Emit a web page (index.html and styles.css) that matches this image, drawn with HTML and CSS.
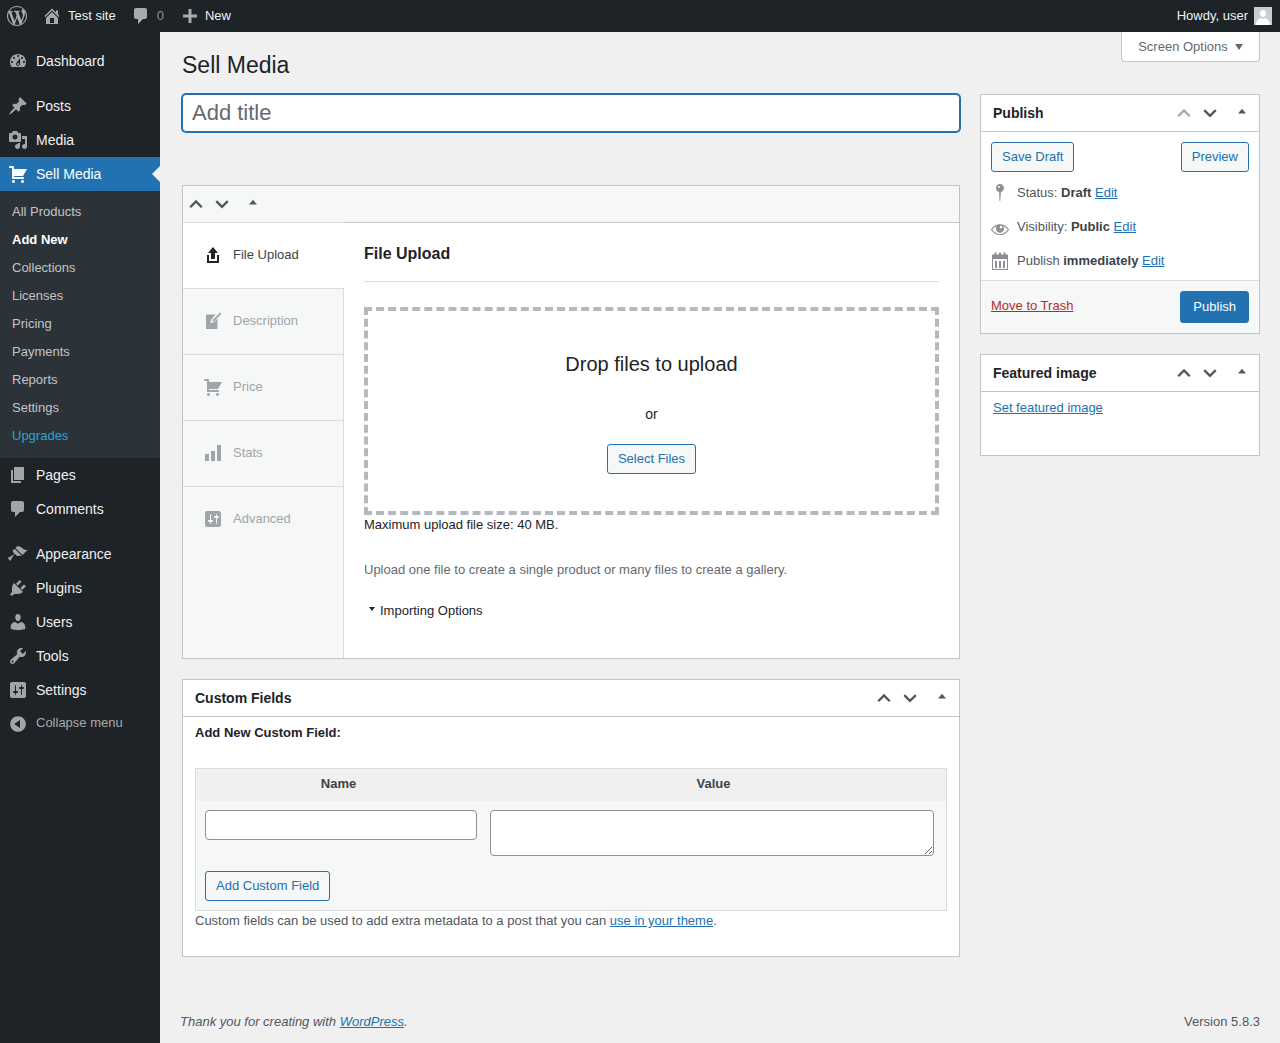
FILE: index.html
```html
<!DOCTYPE html>
<html lang="en">
<head>
<meta charset="utf-8">
<title>Sell Media</title>
<link rel="stylesheet" href="styles.css">
</head>
<body>
<svg class="sprite" aria-hidden="true">
<symbol id="i-wp" viewBox="0 0 20 20"><path d="M20 10c0-5.51-4.49-10-10-10C4.48 0 0 4.49 0 10c0 5.52 4.48 10 10 10 5.51 0 10-4.48 10-10zM7.78 15.37L4.37 6.22c.55-.02 1.17-.08 1.17-.08.5-.06.44-1.13-.06-1.11 0 0-1.45.11-2.37.11-.18 0-.37 0-.58-.01C4.12 2.69 6.87 1.11 10 1.11c2.33 0 4.45.87 6.05 2.34-.68-.11-1.65.39-1.65 1.58 0 .74.45 1.36.9 2.1.35.61.55 1.36.55 2.46 0 1.49-1.4 5-1.4 5l-3.03-8.37c.54-.02.82-.17.82-.17.5-.05.44-1.25-.06-1.22 0 0-1.44.12-2.38.12-.87 0-2.33-.12-2.33-.12-.5-.03-.56 1.2-.06 1.22l.92.08 1.26 3.41zM17.41 10c.24-.64.74-1.87.43-4.25.7 1.29 1.05 2.71 1.05 4.25 0 3.29-1.73 6.24-4.4 7.78.97-2.59 1.94-5.2 2.92-7.78zM6.1 18.09C3.12 16.65 1.11 13.53 1.11 10c0-1.3.23-2.48.72-3.59C3.25 10.3 4.67 14.2 6.1 18.09zm4.03-6.63l2.58 6.98c-.86.29-1.76.45-2.71.45-.79 0-1.57-.11-2.29-.33.81-2.38 1.62-4.74 2.42-7.1z"/></symbol>
<symbol id="i-home" viewBox="0 0 20 20"><path d="M16 8.5l1.53 1.53-1.06 1.06L10 4.62l-6.47 6.47-1.06-1.06L10 2.5l4 4v-2h2v4zm-6-2.46l6 5.99V18H4v-5.97zM12 17v-5H8v5h4z"/></symbol>
<symbol id="i-comment" viewBox="0 0 20 20"><path d="M5 2h9c1.1 0 2 .9 2 2v7c0 1.1-.9 2-2 2h-2l-5 5v-5H5c-1.1 0-2-.9-2-2V4c0-1.1.9-2 2-2z"/></symbol>
<symbol id="i-plus" viewBox="0 0 20 20"><path d="M17 8.5v3h-5.5V17h-3v-5.5H3v-3h5.5V3h3v5.500z"/></symbol>
<symbol id="i-dash" viewBox="0 0 20 20"><path d="M3.76 16h12.48c1.1-1.37 1.76-3.11 1.76-5 0-4.42-3.58-8-8-8s-8 3.58-8 8c0 1.89.66 3.63 1.76 5zM10 4c.55 0 1 .45 1 1s-.45 1-1 1-1-.45-1-1 .45-1 1-1zM6 6c.55 0 1 .45 1 1s-.45 1-1 1-1-.45-1-1 .45-1 1-1zm8 0c.55 0 1 .45 1 1s-.45 1-1 1-1-.45-1-1 .45-1 1-1zm-5.37 5.55L12 7v6c0 1.1-.9 2-2 2s-2-.9-2-2c0-.57.24-1.08.63-1.45zM4 10c.55 0 1 .45 1 1s-.45 1-1 1-1-.45-1-1 .45-1 1-1zm12 0c.55 0 1 .45 1 1s-.45 1-1 1-1-.45-1-1 .45-1 1-1zm-5 3c0-.55-.45-1-1-1s-1 .45-1 1 .45 1 1 1 1-.45 1-1z"/></symbol>
<symbol id="i-post" viewBox="0 0 20 20"><path d="M10.44 3.02l1.82-1.82 6.36 6.35-1.83 1.82c-1.05-.68-2.48-.57-3.41.36l-.75.75c-.92.93-1.04 2.35-.35 3.41l-1.83 1.82-2.41-2.41-2.8 2.79c-.42.42-3.38 2.71-3.8 2.29s1.86-3.39 2.28-3.81l2.79-2.79L4.1 9.36l1.83-1.82c1.05.69 2.48.57 3.4-.36l.75-.75c.93-.92 1.05-2.35.36-3.41z"/></symbol>
<symbol id="i-media" viewBox="0 0 20 20"><path d="M13 11V4c0-.55-.45-1-1-1h-1.67L9 1H5L3.67 3H2c-.55 0-1 .45-1 1v7c0 .55.45 1 1 1h10c.55 0 1-.45 1-1zM7 4.5c1.38 0 2.5 1.12 2.5 2.5S8.38 9.5 7 9.5 4.5 8.38 4.5 7 5.62 4.5 7 4.5zM14 6h5v10.5c0 1.38-1.12 2.5-2.5 2.5S14 17.88 14 16.5s1.12-2.5 2.5-2.5c.17 0 .34.02.5.05V9h-3V6zm-4 8.05V13h2v3.5c0 1.38-1.12 2.5-2.5 2.5S7 17.88 7 16.5 8.12 14 9.5 14c.17 0 .34.02.5.05z"/></symbol>
<symbol id="i-cart" viewBox="0 0 20 20"><path d="M6 13h9c.55 0 1 .45 1 1s-.45 1-1 1H5c-.55 0-1-.45-1-1V4H2c-.55 0-1-.45-1-1s.45-1 1-1h3c.55 0 1 .45 1 1v2h13l-4 7H6v1zm-.5 3c.83 0 1.5.67 1.5 1.5S6.33 19 5.5 19 4 18.33 4 17.5 4.67 16 5.5 16zm9 0c.83 0 1.5.67 1.5 1.5s-.67 1.5-1.5 1.5-1.5-.67-1.5-1.5.67-1.5 1.5-1.5z"/></symbol>
<symbol id="i-page" viewBox="0 0 20 20"><path d="M6 15V2h10v13H6zm-1 1h8v2H3V5h2v11z"/></symbol>
<symbol id="i-brush" viewBox="0 0 20 20"><path d="M14.48 11.06L7.41 3.99l1.5-1.5c.5-.56 2.3-.47 3.51.32 1.21.8 1.43 1.28 2.91 2.1 1.18.64 2.45 1.26 4.45.85zm-.71.71L6.7 4.7 4.93 6.47c-.39.39-.39 1.02 0 1.41l1.06 1.06c.39.39.39 1.03 0 1.42-.6.6-6.4 3.82-6.4 3.82l2.8 2.8s3.22-5.8 3.82-6.4c.39-.39 1.03-.39 1.42 0l1.06 1.06c.39.39 1.02.39 1.41 0z"/></symbol>
<symbol id="i-plugin" viewBox="0 0 20 20"><path d="M13.11 4.36L9.87 7.6 8 5.73l3.24-3.24c.35-.34 1.05-.2 1.56.32.52.51.66 1.21.31 1.55zm-8 1.77l.91-1.12 9.01 9.01-1.19.84c-.71.71-2.63 1.16-3.82 1.16H6.14L4.9 17.26c-.59.59-1.54.59-2.12 0-.59-.58-.59-1.53 0-2.12l1.24-1.24v-3.88c0-1.13.4-3.19 1.09-3.89zm7.26 3.97l3.24-3.24c.34-.35 1.04-.21 1.55.31.52.51.66 1.21.31 1.55l-3.24 3.25z"/></symbol>
<symbol id="i-user" viewBox="0 0 20 20"><path d="M10 9.25c-2.27 0-2.73-3.44-2.73-3.44C7 4.02 7.82 2 9.97 2c2.16 0 2.98 2.02 2.71 3.81 0 0-.41 3.44-2.68 3.44zm0 2.57L12.72 10c2.39 0 4.52 2.33 4.52 4.53v2.49s-3.65 1.13-7.24 1.13c-3.65 0-7.24-1.13-7.24-1.13v-2.49c0-2.25 1.94-4.48 4.47-4.48z"/></symbol>
<symbol id="i-tools" viewBox="0 0 20 20"><path d="M16.68 9.77c-1.34 1.34-3.3 1.67-4.95.99l-5.41 6.52c-.99.99-2.59.99-3.58 0s-.99-2.59 0-3.57l6.52-5.42c-.68-1.65-.35-3.61.99-4.95 1.28-1.28 3.12-1.62 4.72-1.06l-2.89 2.89 2.82 2.82 2.86-2.87c.53 1.58.18 3.39-1.08 4.65zM3.81 16.21c.4.39 1.04.39 1.43 0 .4-.4.4-1.04 0-1.43-.39-.4-1.03-.4-1.43 0-.39.39-.39 1.03 0 1.43z"/></symbol>
<symbol id="i-settings" viewBox="0 0 20 20"><path d="M18 16V4c0-1.1-.9-2-2-2H4c-1.1 0-2 .9-2 2v12c0 1.1.9 2 2 2h12c1.1 0 2-.9 2-2zM8 11h1c.55 0 1 .45 1 1s-.45 1-1 1H8v1.5c0 .28-.22.5-.5.5s-.5-.22-.5-.5V13H6c-.55 0-1-.45-1-1s.45-1 1-1h1V5.5c0-.28.22-.5.5-.5s.5.22.5.5V11zm5-2h-1c-.55 0-1-.45-1-1s.45-1 1-1h1V5.5c0-.28.22-.5.5-.5s.5.22.5.5V7h1c.55 0 1 .45 1 1s-.45 1-1 1h-1v5.5c0 .28-.22.5-.5.5s-.5-.22-.5-.5V9z"/></symbol>
<symbol id="i-collapse" viewBox="0 0 20 20"><path d="M10 2.16c4.33 0 7.84 3.51 7.84 7.84s-3.51 7.84-7.84 7.84S2.16 14.33 2.16 10 5.71 2.16 10 2.16zm2 11.72V6.12L6.18 9.97z"/></symbol>
<symbol id="i-up" viewBox="0 0 20 20"><path d="M3.600 13.600L10 7.200l6.400 6.400" fill="none" stroke="currentColor" stroke-width="2.600"/></symbol>
<symbol id="i-down" viewBox="0 0 20 20"><path d="M3.600 6.800l6.400 6.400 6.400-6.400" fill="none" stroke="currentColor" stroke-width="2.600"/></symbol>
<symbol id="i-tri" viewBox="0 0 20 20"><path d="M10 6l5 6H5z"/></symbol>
<symbol id="i-upload" viewBox="0 0 20 20"><path d="M8 14V8H5l5-6 5 6h-3v6H8zm-2 2v-6H4v8h12.01v-8H14v6H6z"/></symbol>
<symbol id="i-note" viewBox="0 0 20 20"><path d="M3 3.500h9.500L8 9l-.5 3 3-.5 4-4V18H3zM17.200 1.500l1.300 1.300-7.500 7.500-1.700.4.400-1.700z"/></symbol>
<symbol id="i-stats" viewBox="0 0 20 20"><path d="M2 11h4v7H2zM8 8h4v10H8zM14 2h4v16h-4z"/></symbol>
<symbol id="i-pin" viewBox="0 0 20 20"><path d="M10 1c2.200 0 4 1.800 4 4 0 1.900-1.300 3.500-3.100 3.900L10.300 18h-.8l-.4-9.100C7.300 8.500 6 6.900 6 5c0-2.200 1.800-4 4-4zM9 3a1 1 0 1 0 0 2 1 1 0 0 0 0-2z"/></symbol>
<symbol id="i-eye" viewBox="0 0 20 20"><path d="M18.300 9.500C15 4.900 8.500 3.800 3.900 7.200c-1.200.9-2.200 2.100-3 3.400.2.400.5.8.8 1.200 3.300 4.600 9.600 5.600 14.200 2.400.9-.7 1.700-1.400 2.400-2.400.3-.4.5-.8.8-1.200-.3-.4-.5-.8-.8-1.100zm-8.200-2.300c.5-.5 1.300-.5 1.800 0s.5 1.300 0 1.800-1.300.5-1.800 0c-.5-.5-.5-1.300 0-1.800zm-.1 7.700c-3.100 0-6-1.600-7.700-4.200C3.500 9 5.100 7.800 7 7c-.7.8-1 1.700-1 2.700 0 2.200 1.700 4.100 4 4.100 2.200 0 4.100-1.700 4.100-4 0-1-.4-2-1.100-2.800 1.900.8 3.500 2 4.700 3.700-1.700 2.600-4.600 4.200-7.700 4.200z"/></symbol>
<symbol id="i-cal" viewBox="0 0 20 20"><path d="M2 3.500h2.500V1.500h2v2h2.500V1.500h2v2h2.500V1.500h2v2H18V19H2zM3 8v10h14V8zM5 10h2v7H5zM9 10h2v7H9zM13 10h2v7h-2z"/></symbol>
</svg>

<header class="adminbar">
  <a class="ab-item ab-logo"><svg class="ab-wp"><use href="#i-wp"/></svg></a>
  <a class="ab-item ab-site"><svg class="ab-icon"><use href="#i-home"/></svg>Test site</a>
  <a class="ab-item ab-comments"><svg class="ab-icon"><use href="#i-comment"/></svg><span class="ab-count">0</span></a>
  <a class="ab-item ab-new"><svg class="ab-icon"><use href="#i-plus"/></svg>New</a>
  <a class="ab-item ab-user">Howdy, user<span class="avatar"><svg viewBox="0 0 18 18"><path d="M0 0h18v18H0z" fill="#ccc"/><path d="M9 3c2.200 0 3.300 1.800 3 4-.2 1.500-1 3-3 3s-2.800-1.500-3-3c-.3-2.200.8-4 3-4zM2 18c0-4 2.800-6.500 5-7l2 1 2-1c2.200.5 5 3 5 7z" fill="#fff"/></svg></span></a>
</header>

<div class="shell">
  <nav class="sidebar">
    <ul class="menu">
      <li class="menu-item"><svg class="menu-icon"><use href="#i-dash"/></svg>Dashboard</li>
      <li class="menu-sep"></li>
      <li class="menu-item"><svg class="menu-icon"><use href="#i-post"/></svg>Posts</li>
      <li class="menu-item"><svg class="menu-icon"><use href="#i-media"/></svg>Media</li>
      <li class="menu-item current"><svg class="menu-icon"><use href="#i-cart"/></svg>Sell Media</li>
      <li>
        <ul class="submenu">
          <li>All Products</li>
          <li class="sub-current">Add New</li>
          <li>Collections</li>
          <li>Licenses</li>
          <li>Pricing</li>
          <li>Payments</li>
          <li>Reports</li>
          <li>Settings</li>
          <li class="sub-upgrade">Upgrades</li>
        </ul>
      </li>
      <li class="menu-item"><svg class="menu-icon"><use href="#i-page"/></svg>Pages</li>
      <li class="menu-item"><svg class="menu-icon"><use href="#i-comment"/></svg>Comments</li>
      <li class="menu-sep"></li>
      <li class="menu-item"><svg class="menu-icon"><use href="#i-brush"/></svg>Appearance</li>
      <li class="menu-item"><svg class="menu-icon"><use href="#i-plugin"/></svg>Plugins</li>
      <li class="menu-item"><svg class="menu-icon"><use href="#i-user"/></svg>Users</li>
      <li class="menu-item"><svg class="menu-icon"><use href="#i-tools"/></svg>Tools</li>
      <li class="menu-item"><svg class="menu-icon"><use href="#i-settings"/></svg>Settings</li>
      <li class="menu-item collapse"><svg class="menu-icon"><use href="#i-collapse"/></svg>Collapse menu</li>
    </ul>
  </nav>

  <main class="content">
    <div class="page-head">
      <h1>Sell Media</h1>
      <button class="screen-options">Screen Options<span class="caret"></span></button>
    </div>

    <div class="columns">
      <div class="col-main">
        <input class="title-input" type="text" placeholder="Add title">

        <section class="box sell-box">
          <div class="sell-head">
            <div class="handles">
              <svg class="h-chev"><use href="#i-up"/></svg>
              <svg class="h-chev"><use href="#i-down"/></svg>
              <svg class="h-tri"><use href="#i-tri"/></svg>
            </div>
          </div>
          <div class="sell-body">
            <ul class="tabs">
              <li class="tab active"><svg class="tab-icon"><use href="#i-upload"/></svg>File Upload</li>
              <li class="tab"><svg class="tab-icon"><use href="#i-note"/></svg>Description</li>
              <li class="tab"><svg class="tab-icon"><use href="#i-cart"/></svg>Price</li>
              <li class="tab"><svg class="tab-icon"><use href="#i-stats"/></svg>Stats</li>
              <li class="tab"><svg class="tab-icon"><use href="#i-settings"/></svg>Advanced</li>
            </ul>
            <div class="panel">
              <h3 class="panel-title">File Upload</h3>
              <div class="dropzone">
                <p class="drop-title">Drop files to upload</p>
                <p class="drop-or">or</p>
                <button class="btn">Select Files</button>
              </div>
              <p class="max-size">Maximum upload file size: 40 MB.</p>
              <p class="upload-help">Upload one file to create a single product or many files to create a gallery.</p>
              <p class="importing"><span class="small-caret"></span>Importing Options</p>
            </div>
          </div>
        </section>

        <section class="box custom-box">
          <div class="box-head">
            <h2>Custom Fields</h2>
            <div class="handles end">
              <svg class="h-chev"><use href="#i-up"/></svg>
              <svg class="h-chev"><use href="#i-down"/></svg>
              <svg class="h-tri"><use href="#i-tri"/></svg>
            </div>
          </div>
          <div class="custom-body">
            <p class="add-new">Add New Custom Field:</p>
            <div class="cf-table">
              <div class="cf-row cf-headrow"><span>Name</span><span>Value</span></div>
              <div class="cf-row cf-inputs">
                <input class="cf-name" type="text">
                <textarea class="cf-value"></textarea>
              </div>
              <div class="cf-submit"><button class="btn">Add Custom Field</button></div>
            </div>
            <p class="cf-note">Custom fields can be used to add extra metadata to a post that you can <a href="#">use in your theme</a>.</p>
          </div>
        </section>
      </div>

      <aside class="col-side">
        <section class="box">
          <div class="box-head">
            <h2>Publish</h2>
            <div class="handles end">
              <svg class="h-chev dim"><use href="#i-up"/></svg>
              <svg class="h-chev"><use href="#i-down"/></svg>
              <svg class="h-tri"><use href="#i-tri"/></svg>
            </div>
          </div>
          <div class="pub-actions">
            <button class="btn">Save Draft</button>
            <button class="btn">Preview</button>
          </div>
          <div class="pub-rows">
            <div class="pub-row"><svg class="pub-icon"><use href="#i-pin"/></svg><span>Status: <b>Draft</b> <a href="#">Edit</a></span></div>
            <div class="pub-row"><svg class="pub-icon"><use href="#i-eye"/></svg><span>Visibility: <b>Public</b> <a href="#">Edit</a></span></div>
            <div class="pub-row"><svg class="pub-icon"><use href="#i-cal"/></svg><span>Publish <b>immediately</b> <a href="#">Edit</a></span></div>
          </div>
          <div class="pub-major">
            <a class="trash" href="#">Move to Trash</a>
            <button class="btn btn-primary">Publish</button>
          </div>
        </section>

        <section class="box featured">
          <div class="box-head">
            <h2>Featured image</h2>
            <div class="handles end">
              <svg class="h-chev"><use href="#i-up"/></svg>
              <svg class="h-chev"><use href="#i-down"/></svg>
              <svg class="h-tri"><use href="#i-tri"/></svg>
            </div>
          </div>
          <div class="featured-body"><a href="#">Set featured image</a></div>
        </section>
      </aside>
    </div>

    <footer class="footer">
      <span class="thanks">Thank you for creating with <a href="#">WordPress</a>.</span>
      <span>Version 5.8.3</span>
    </footer>
  </main>
</div>
</body>
</html>
```

FILE: styles.css
```css
* { box-sizing: border-box; }
html, body { margin: 0; padding: 0; }
body {
  background: #f0f0f1;
  color: #3c434a;
  font: 13px/1.4 "Liberation Sans", Arial, sans-serif;
  height: 1043px;
  overflow: hidden;
}
ul { list-style: none; margin: 0; padding: 0; }
p, h1, h2, h3 { margin: 0; }
a { color: #2271b1; }
button, input, textarea { font: inherit; }
svg { fill: currentColor; display: block; flex: none; }
.sprite { display: none; }

/* admin bar */
.adminbar {
  height: 32px;
  background: #1d2327;
  color: #f0f0f1;
  display: flex;
  align-items: center;
  line-height: 32px;
}
.ab-item { display: flex; align-items: center; color: inherit; }
.ab-logo { margin-left: 7px; color: #a7aaad; }
.ab-wp { width: 20px; height: 20px; }
.ab-icon { width: 20px; height: 20px; color: #a7aaad; }
.ab-site { margin-left: 15px; }
.ab-site .ab-icon { margin-right: 6px; }
.ab-comments { margin-left: 15px; }
.ab-count { margin-left: 6px; color: #8c8f94; }
.ab-new { margin-left: 16px; }
.ab-new .ab-icon { margin-right: 5px; }
.ab-user { margin-left: auto; margin-right: 8px; }
.avatar { margin-left: 6px; width: 18px; height: 18px; display: block; }

/* layout */
.shell { display: flex; height: 1011px; }
.sidebar { width: 160px; flex: none; background: #1d2327; padding-top: 12px; }
.content { flex: 1; display: flex; flex-direction: column; padding: 0 20px; min-width: 0; }

/* menu */
.menu-item {
  height: 34px;
  display: flex;
  align-items: center;
  font-size: 14px;
  color: #f0f0f1;
  position: relative;
  padding-top: 2px;
}
.menu-icon { width: 20px; height: 20px; margin: -2px 8px 0; color: #a0a5aa; }
.menu-sep { height: 11px; }
.menu-item.current { background: #2271b1; color: #fff; }
.menu-item.current .menu-icon { color: #fff; }
.menu-item.current::after {
  content: "";
  position: absolute;
  right: 0;
  top: 50%;
  margin-top: -8px;
  border: 8px solid transparent;
  border-right-color: #f0f0f1;
}
.submenu { background: #2c3338; padding: 7px 0 8px; }
.submenu li {
  height: 28px;
  line-height: 28px;
  padding-left: 12px;
  color: #c3c4c7;
}
.submenu .sub-current { color: #fff; font-weight: 700; }
.submenu .sub-upgrade { color: #2ea2cc; }
.menu-item.collapse { font-size: 13px; color: #a7aaad; margin-top: -1px; padding-top: 0; }
.menu-item.collapse .menu-icon { margin-top: 2px; }

/* page header */
.page-head {
  display: flex;
  justify-content: space-between;
  align-items: flex-start;
  padding-left: 2px;
  height: 62px;
}
.page-head h1 {
  font-size: 23px;
  font-weight: 400;
  line-height: 30px;
  color: #1d2327;
  margin-top: 18px;
}
.screen-options {
  width: 139px;
  height: 30px;
  background: #fff;
  border: 1px solid #c3c4c7;
  border-top: 0;
  border-radius: 0 0 4px 4px;
  color: #646970;
  padding: 1px 0 0;
  display: flex;
  align-items: center;
  justify-content: center;
}
.caret {
  margin-left: 7px;
  border: 4.500px solid transparent;
  border-top: 6px solid #646970;
  border-bottom: 0;
}

.columns { display: flex; gap: 20px; padding-left: 2px; }
.col-main { width: 778px; flex: none; }
.col-side { width: 280px; flex: none; }

.title-input {
  display: block;
  width: 100%;
  height: 38px;
  border: 1px solid #2271b1;
  box-shadow: 0 0 0 1px #2271b1;
  border-radius: 4px;
  padding: 0 9px;
  font-size: 22px;
  outline: none;
  background: #fff;
}
.title-input::placeholder { color: #646970; }

.box { background: #fff; border: 1px solid #c3c4c7; }
.box-head {
  height: 37px;
  border-bottom: 1px solid #c3c4c7;
  display: flex;
  align-items: center;
  padding-left: 12px;
}
.box-head h2 { font-size: 14px; font-weight: 700; color: #1d2327; line-height: 1; }
.handles { display: flex; align-items: center; color: #50575e; }
.handles.end { margin-left: auto; padding-right: 9px; }
.h-chev { width: 18px; height: 18px; margin-right: 8px; color: #50575e; }
.h-chev.dim { color: #a7aaad; }
.h-tri { width: 16px; height: 16px; margin: -3px 0 0 7px; color: #50575e; }

/* sell media box */
.sell-box { margin-top: 53px; height: 474px; background: #fff; }
.sell-head {
  height: 37px;
  background: #f6f7f7;
  display: flex;
  align-items: center;
  padding-left: 4px;
  border-bottom: 1px solid #c3c4c7;
  margin-bottom: -1px;
}
.sell-head .h-tri { margin-left: 6px; margin-top: -2px; }
.sell-body { display: flex; height: 436px; position: relative; }
.tabs {
  width: 161px;
  flex: none;
  background: #f6f7f7;
  border-right: 1px solid #dcdcde;
}
.tab {
  height: 66px;
  border-bottom: 1px solid #dcdcde;
  display: flex;
  align-items: center;
  color: #a0a5aa;
  padding-left: 20px;
}
.tab:last-child { border-bottom-color: transparent; }
.tab.active {
  background: #fff;
  color: #3c434a;
  height: 67px;
  margin-right: -1px;
  border-top: 1px solid #dcdcde;
  border-right: 0;
  position: relative;
  z-index: 1;
}
.tab-icon { width: 20px; height: 20px; margin: -2px 10px 0 0; color: #a0a5aa; }
.tab.active .tab-icon { color: #1d2327; }
.panel { flex: 1; padding: 0 20px; min-width: 0; }
.panel-title {
  font-size: 16px;
  font-weight: 700;
  color: #1d2327;
  line-height: 22px;
  padding: 21px 0 16px;
  border-bottom: 1px solid #dcdcde;
  height: 60px;
}
.dropzone {
  margin-top: 25px;
  height: 208px;
  border: 4px dashed #b4b9be;
  display: flex;
  flex-direction: column;
  align-items: center;
  color: #1d2327;
}
.drop-title { font-size: 20px; line-height: 28px; margin-top: 39px; }
.drop-or { font-size: 14px; line-height: 20px; margin-top: 26px; }
.dropzone .btn { margin-top: 20px; }
.max-size { color: #1d2327; line-height: 18px; margin-top: 1px; }
.upload-help { color: #646970; line-height: 18px; margin-top: 27px; }
.importing {
  color: #1d2327;
  line-height: 18px;
  margin-top: 23px;
  display: flex;
  align-items: center;
  padding-left: 5px;
}
.small-caret {
  border: 3px solid transparent;
  border-top: 4px solid #1d2327;
  border-bottom: 0;
  margin: -4px 5px 0 0;
}

.btn {
  height: 30px;
  padding: 0 10px;
  background: #f6f7f7;
  border: 1px solid #2271b1;
  border-radius: 3px;
  color: #2271b1;
  line-height: 28px;
}
.btn-primary { background: #2271b1; color: #fff; height: 32px; padding: 0 12px; }

/* custom fields */
.custom-box { margin-top: 20px; height: 278px; }
.custom-body { padding: 0 12px; }
.add-new { font-weight: 700; color: #1d2327; line-height: 18px; padding-top: 7px; }
.cf-table {
  margin-top: 26px;
  height: 143px;
  border: 1px solid #dcdcde;
  background: #f6f7f7;
}
.cf-row { display: grid; grid-template-columns: 285px 465px; }
.cf-headrow {
  height: 32px;
  background: #f0f0f1;
  font-weight: 700;
  text-align: center;
  line-height: 30px;
}
.cf-inputs { padding-top: 9px; }
.cf-name, .cf-value {
  border: 1px solid #8c8f94;
  border-radius: 4px;
  background: #fff;
  margin: 0 0 0 9px;
  display: block;
}
.cf-name { width: 272px; height: 30px; }
.cf-value { width: 444px; height: 46px; }
.cf-submit { padding: 15px 0 0 9px; }
.cf-note { color: #50575e; line-height: 18px; margin-top: 1px; }

/* publish */
.pub-actions {
  display: flex;
  justify-content: space-between;
  padding: 10px 10px 0;
}
.pub-rows { padding-top: 4px; height: 108px; }
.pub-row {
  height: 34px;
  display: flex;
  align-items: center;
  padding-left: 9px;
  color: #50575e;
}
.pub-row b { color: #3c434a; }
.pub-row:nth-child(2) .pub-icon { margin-top: 4px; }
.pub-icon { width: 20px; height: 20px; color: #8c8f94; margin-right: 7px; }
.pub-major {
  height: 53px;
  border-top: 1px solid #dcdcde;
  background: #f6f7f7;
  display: flex;
  justify-content: space-between;
  align-items: center;
  padding: 0 10px;
}
.trash { color: #b32d2e; margin-top: -2px; }
.featured { margin-top: 20px; height: 102px; }
.featured-body { padding: 7px 12px 0; }

/* footer */
.footer {
  margin-top: auto;
  height: 30px;
  display: flex;
  justify-content: space-between;
  color: #50575e;
  line-height: 18px;
}
.thanks { font-style: italic; }
```
